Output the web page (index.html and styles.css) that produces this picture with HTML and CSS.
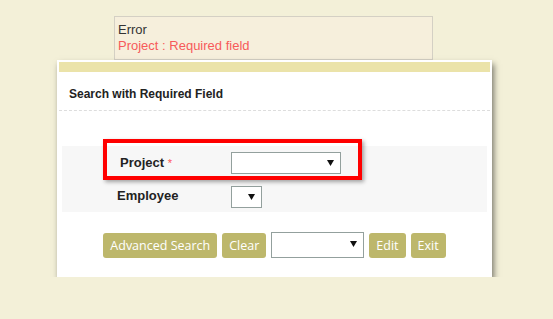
FILE: index.html
```html
<!DOCTYPE html>
<html lang="en">
<head>
    <meta charset="UTF-8">
    <meta name="viewport" content="width=device-width, initial-scale=1.0">
    <title>Search with Required Field</title>
    <link rel="stylesheet" href="styles.css">
</head>
<body>
    <div class="error-box">
        <div class="error-title">Error</div>
        <div class="error-msg">Project : Required field</div>
    </div>

    <div class="panel">
        <div class="panel-bar"></div>
        <h2 class="panel-title">Search with Required Field</h2>

        <div class="fields">
            <div class="highlight"></div>
            <div class="field-row">
                <label class="field-label project-label">Project <span class="req">*</span></label>
                <span class="select select-project">
                    <svg class="arrow" width="7" height="6" viewBox="0 0 7 6"><path d="M0 0H7L3.5 6Z" fill="#111"/></svg>
                </span>
            </div>
            <div class="field-row">
                <label class="field-label">Employee</label>
                <span class="select select-employee">
                    <svg class="arrow" width="7" height="6" viewBox="0 0 7 6"><path d="M0 0H7L3.5 6Z" fill="#111"/></svg>
                </span>
            </div>
        </div>

        <div class="actions">
            <button class="btn">Advanced Search</button>
            <button class="btn">Clear</button>
            <span class="select select-action">
                <svg class="arrow" width="7" height="6" viewBox="0 0 7 6"><path d="M0 0H7L3.5 6Z" fill="#111"/></svg>
            </span>
            <button class="btn">Edit</button>
            <button class="btn">Exit</button>
        </div>
    </div>
</body>
</html>
```

FILE: styles.css
```css
body {
    margin: 0;
    padding-top: 16px;
    background-color: #f3f0d8;
    font-family: "Liberation Sans", Arial, sans-serif;
    color: #222;
}
.error-box {
    margin-left: 114px;
    width: 319px;
    height: 44px;
    box-sizing: border-box;
    border: 1px solid #d4d0c4;
    background-color: #f6efdc;
    padding: 5px 3px 0;
    font-size: 13px;
    line-height: 16px;
}
.error-title {
    color: #333;
}
.error-msg {
    color: #f65a5a;
}
.panel {
    margin-left: 57px;
    width: 435px;
    box-sizing: border-box;
    padding: 2px 2px 19px;
    background-color: #fff;
    box-shadow: 2px 4px 6px rgba(0,0,0,0.5);
}
.panel-bar {
    height: 10px;
    background-color: #ebe3a9;
}
.panel-title {
    margin: 0;
    padding: 15px 10px 8px;
    font-size: 12px;
    line-height: 15px;
    font-weight: bold;
    color: #222;
    border-bottom: 1px dashed #ddd;
}
.fields {
    position: relative;
    margin: 35px 3px 0;
    padding-left: 55px;
    background-color: #f7f7f7;
}
.highlight {
    position: absolute;
    left: 41px;
    top: -7px;
    width: 259px;
    height: 41px;
    box-sizing: border-box;
    border: 4px solid #f00;
    box-shadow: 2px 2px 4px rgba(0,0,0,0.35);
}
.field-row {
    display: flex;
    align-items: center;
    height: 33px;
}
.field-label {
    width: 114px;
    font-size: 13px;
    font-weight: bold;
    color: #222;
}
.project-label {
    padding-left: 3px;
    width: 111px;
}
.req {
    color: #f55;
    font-weight: normal;
    font-size: 11px;
}
.select {
    display: inline-flex;
    align-items: center;
    justify-content: flex-end;
    box-sizing: border-box;
    border: 1px solid #93a09d;
    background-color: #fff;
    padding-right: 6px;
}
.select-project {
    width: 110px;
    height: 22px;
}
.select-employee {
    width: 31px;
    height: 22px;
    margin-top: 2px;
}
.select-action {
    width: 93px;
    height: 26px;
    align-items: flex-start;
    padding-top: 8px;
}
.actions {
    display: flex;
    justify-content: center;
    align-items: center;
    gap: 5px;
    margin-top: 20px;
}
.btn {
    height: 25px;
    padding: 0 7px;
    border: none;
    border-radius: 3px;
    background-color: #bdb76b;
    color: #fff;
    font-family: "Open Sans", sans-serif;
    font-size: 12.5px;
    cursor: pointer;
}
```
